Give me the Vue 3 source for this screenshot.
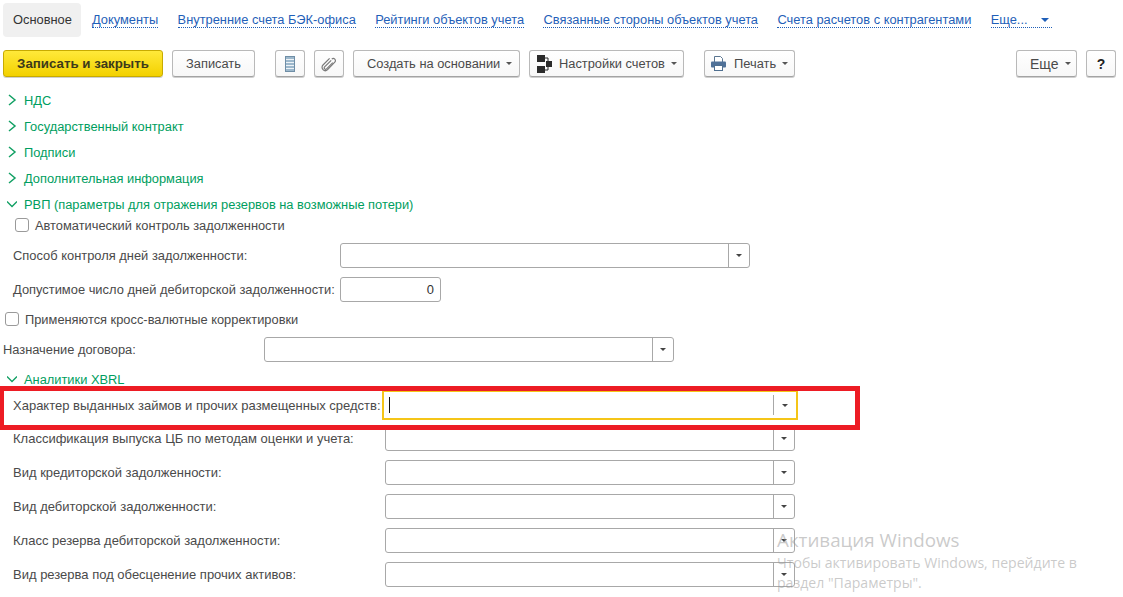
<script setup>
const tabs = ['Документы', 'Внутренние счета БЭК-офиса', 'Рейтинги объектов учета', 'Связанные стороны объектов учета', 'Счета расчетов с контрагентами']
const closedGroups = ['НДС', 'Государственный контракт', 'Подписи', 'Дополнительная информация']
const xbrl = [
  { label: 'Классификация выпуска ЦБ по методам оценки и учета:' },
  { label: 'Вид кредиторской задолженности:' },
  { label: 'Вид дебиторской задолженности:' },
  { label: 'Класс резерва дебиторской задолженности:' },
  { label: 'Вид резерва под обесценение прочих активов:' }
]
</script>

<template>
  <div class="page">
    <nav class="tabs">
      <span class="tab-active">Основное</span>
      <a v-for="t in tabs" :key="t" class="tab-link">{{ t }}</a>
      <a class="tab-link tab-more">Еще...<i class="more-tri"></i></a>
    </nav>

    <div class="toolbar">
      <button class="btn btn-primary">Записать и закрыть</button>
      <button class="btn btn-save">Записать</button>
      <button class="btn btn-icon btn-list">
        <svg width="10" height="16" viewBox="0 0 10 16">
          <rect x="0.5" y="0.5" width="9" height="15" fill="#9db8cc" stroke="#6f8ea6"/>
          <path d="M1 3.5h8M1 6.5h8M1 9.5h8M1 12.5h8" stroke="#eef3f7"/>
        </svg>
      </button>
      <button class="btn btn-icon btn-clip">
        <svg width="16" height="16" viewBox="0 0 16 16" fill="none" stroke="#7a7a7a" stroke-width="1.2">
          <path d="M11.8 2.2a2.1 2.1 0 0 1 3 3L7.6 12.6a3.2 3.2 0 0 1-4.6-4.6L9.6 1.4" transform="translate(-1 1)"/>
          <path d="M10.8 5.2 4.6 11.4a1.4 1.4 0 0 1-2-2L9.2 2.8" transform="translate(1 1.5)"/>
        </svg>
      </button>
      <button class="btn btn-create">Создать на основании<i class="tri"></i></button>
      <button class="btn btn-settings">
        <svg class="ico-settings" width="15" height="18" viewBox="0 0 15 18">
          <path d="M0 0h8v7H0zM9 6h6v6H9zM0 11h8v7H0z" fill="#2b2b2b"/>
          <path d="M8 3h3v3M11 12v3H8" fill="none" stroke="#2b2b2b"/>
        </svg>
        Настройки счетов<i class="tri"></i>
      </button>
      <button class="btn btn-print">
        <svg class="ico-print" width="15" height="15" viewBox="0 0 15 15">
          <path d="M3.5 6V.5h6l2 2V6" fill="#fff" stroke="#5a7590"/>
          <rect x="0" y="5.5" width="15" height="6" rx="1" fill="#4f7198"/>
          <rect x="3.5" y="9.5" width="8" height="5" fill="#fff" stroke="#4f6f90"/>
        </svg>
        Печать<i class="tri"></i>
      </button>
      <div class="spacer"></div>
      <button class="btn btn-more">Еще<i class="tri"></i></button>
      <button class="btn btn-help">?</button>
    </div>

    <div v-for="g in closedGroups" :key="g" class="group">
      <svg class="chev" width="10" height="12" viewBox="0 0 10 12"><path d="M2 1l6 5-6 5" fill="none" stroke="#12a064" stroke-width="1.5"/></svg>
      <span>{{ g }}</span>
    </div>
    <div class="group">
      <svg class="chev" width="10" height="12" viewBox="0 0 10 12"><path d="M0 3.5l5 5 5-5" fill="none" stroke="#12a064" stroke-width="1.3"/></svg>
      <span>РВП (параметры для отражения резервов на возможные потери)</span>
    </div>

    <div class="check-row indent-a"><i class="box"></i><span>Автоматический контроль задолженности</span></div>

    <div class="field field-a first-a">
      <label class="lbl-a">Способ контроля дней задолженности:</label>
      <div class="inp w-410"><span class="fill"></span><span class="drop"><i class="dtri"></i></span></div>
    </div>
    <div class="field field-a">
      <label class="lbl-a">Допустимое число дней дебиторской задолженности:</label>
      <div class="inp w-101 num">0</div>
    </div>

    <div class="check-row indent-b"><i class="box"></i><span>Применяются кросс-валютные корректировки</span></div>

    <div class="field field-b">
      <label class="lbl-b">Назначение договора:</label>
      <div class="inp w-410"><span class="fill"></span><span class="drop"><i class="dtri"></i></span></div>
    </div>

    <div class="group group-xbrl">
      <svg class="chev" width="10" height="12" viewBox="0 0 10 12"><path d="M0 3.5l5 5 5-5" fill="none" stroke="#12a064" stroke-width="1.3"/></svg>
      <span>Аналитики XBRL</span>
    </div>

    <div class="field field-c focus-row">
      <label class="lbl-c">Характер выданных займов и прочих размещенных средств:</label>
      <div class="inp inp-focus"><i class="caret"></i><span class="fill"></span><span class="drop"><i class="dtri"></i></span></div>
    </div>
    <div v-for="r in xbrl" :key="r.label" class="field field-c">
      <label class="lbl-c">{{ r.label }}</label>
      <div class="inp w-410"><span class="fill"></span><span class="drop"><i class="dtri"></i></span></div>
    </div>

    <div class="redbox"></div>

    <div class="watermark">
      <div class="wm-title">Активация Windows</div>
      <div class="wm-text">Чтобы активировать Windows, перейдите в<br>раздел "Параметры".</div>
    </div>
  </div>
</template>

<style>
html, body { margin: 0; background: #fff; overflow: hidden; }
</style>

<style scoped>
.page {
  position: relative;
  width: 1123px;
  height: 597px;
  overflow: hidden;
  background: #fff;
  font-family: "Liberation Sans", Arial, sans-serif;
  font-size: 12.85px;
  color: #4a4a4a;
  box-sizing: border-box;
  padding-top: 3px;
}
.tabs { display: flex; align-items: center; height: 34px; padding-left: 3px; }
.tab-active {
  width: 78px; box-sizing: border-box; height: 34px; line-height: 34px; padding: 0 10px; background: #f0f0f0;
  border-radius: 4px; color: #333; margin-right: 11px; white-space: nowrap;
}
.tab-link {
  color: #1f5fb8; border-bottom: 1px dotted #1f5fb8; line-height: 14px; margin-right: 19.4px;
}
.more-tri {
  display: inline-block; width: 0; height: 0; margin-left: 17px; margin-right: 3px;
  border: 4px solid transparent; border-top: 4px solid #1f5fb8; border-bottom: 0; vertical-align: 2px;
}
.tab-more .more-tri { margin-left: 13px; }
.toolbar { display: flex; align-items: center; height: 27px; margin-top: 13px; padding-left: 3px; }
.btn {
  box-sizing: border-box; height: 27px; padding: 0; margin: 0;
  background: linear-gradient(#fff, #f7f7f7); border: 1px solid #b9b9b9; border-bottom-color: #a3a3a3;
  border-radius: 3px; box-shadow: 0 1px 0 #cfcfcf;
  font: 12.85px "Liberation Sans", Arial, sans-serif; color: #4a4a4a;
  display: flex; align-items: center; justify-content: flex-start; white-space: nowrap;
}
.btn-primary {
  width: 160px; background: linear-gradient(#ffe93a, #f3d100); border-color: #c8ab00;
  font-weight: bold; color: #3d3a1a; font-size: 13.3px; margin-right: 9px; justify-content: center;
}
.btn-save { width: 83px; margin-right: 20px; justify-content: center; }
.btn-icon { width: 30px; margin-right: 9px; justify-content: center; }
.btn-create { width: 167px; margin-right: 9px; padding-left: 13px; }
.btn-settings { width: 155px; margin-right: 20px; padding-left: 7px; }
.btn-print { width: 91px; padding-left: 6px; }
.spacer { flex: 1; }
.btn-more { width: 61px; margin-right: 9px; padding-left: 13px; font-size: 14px; }
.btn-help { width: 30px; margin-right: 7px; font-weight: bold; font-size: 14px; color: #222; justify-content: center; }
.ico-settings { margin-right: 7px; }
.ico-print { margin-right: 8px; }
.tri {
  display: inline-block; width: 0; height: 0; margin-left: 6px;
  border: 3px solid transparent; border-top: 3px solid #555; border-bottom: 0;
}
.group {
  display: flex; align-items: center; height: 26px; padding-left: 7px; color: #009e60;
}
.toolbar + .group { margin-top: 10px; }
.chev { margin-right: 7px; flex: none; }
.group-xbrl { height: 20px; margin-top: 7px; }
.check-row { display: flex; align-items: center; height: 16px; }
.indent-a { padding-left: 15px; }
.indent-b { padding-left: 5px; }
.box {
  display: block; box-sizing: border-box; width: 14px; height: 14px; margin-right: 6px;
  border: 1px solid #9a9a9a; border-radius: 3px; background: #fff;
}
.field { display: flex; align-items: center; height: 25px; }
.field-a { padding-left: 13px; margin-bottom: 9px; font-size: 12.9px; }
.first-a { margin-top: 10px; }
.field-b { padding-left: 3px; margin-top: 10px; }
.field-c { padding-left: 13px; margin-bottom: 9px; font-size: 13px; }
.lbl-a { width: 327px; flex: none; }
.lbl-b { width: 261px; flex: none; }
.lbl-c { width: 372px; flex: none; }
.inp {
  box-sizing: border-box; height: 25px; border: 1px solid #a8a8a8; border-radius: 3px;
  background: #fff; display: flex; align-items: stretch;
}
.w-410 { width: 410px; }
.w-101 { width: 101px; }
.num { justify-content: flex-end; align-items: center; padding-right: 6px; color: #333; }
.fill { flex: 1; }
.drop {
  width: 20px; border-left: 1px solid #a8a8a8; display: flex; align-items: center; justify-content: center;
}
.dtri { width: 0; height: 0; border: 3px solid transparent; border-top: 3px solid #444; border-bottom: 0; }
.focus-row { margin-top: 1px; margin-bottom: 6px; height: 30px; }
.focus-row .lbl-c { width: 369px; }
.inp-focus {
  width: 416px; height: 30px; border: 2px solid #f5c518; border-radius: 0; padding: 3px 0;
}
.inp-focus .drop { width: 22px; }
.caret { width: 1px; background: #111; margin: 2px 0 2px 5px; }
.redbox {
  position: absolute; left: 0; top: 386px; width: 860px; height: 44px; box-sizing: border-box;
  border: 5px solid #ed1c24; border-left-width: 4px; pointer-events: none;
}
.watermark {
  position: absolute; left: 777px; top: 528px; color: rgba(150,150,150,.5);
  font-family: "Open Sans", sans-serif;
}
.wm-title { font-size: 18.8px; line-height: 24px; }
.wm-text { font-size: 14.1px; line-height: 20px; margin-top: 1px; }
</style>
